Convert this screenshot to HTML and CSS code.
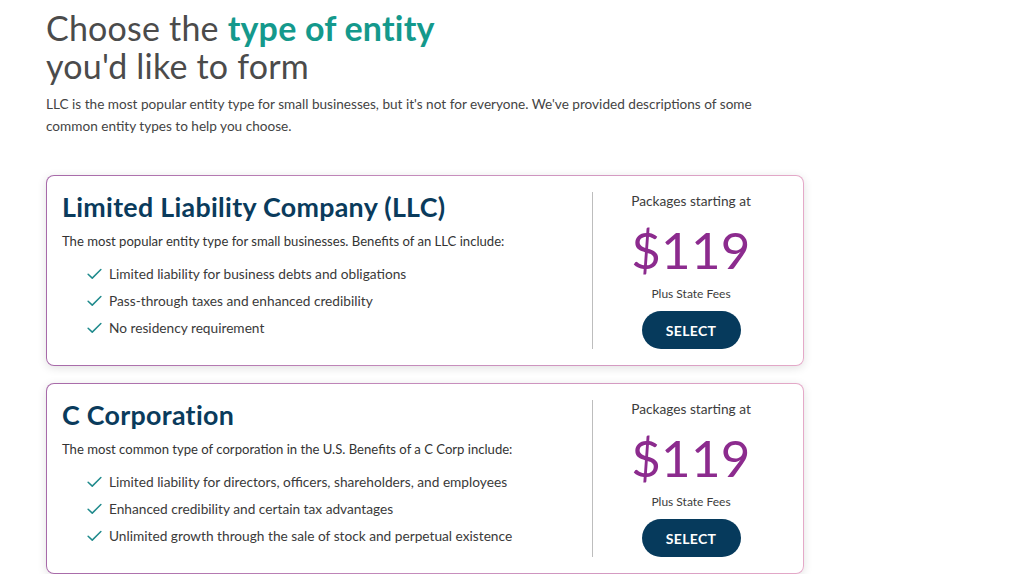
FILE: index.html
```html
<!DOCTYPE html>
<html lang="en">
<head>
<meta charset="utf-8">
<title>Choose entity type</title>
<link rel="stylesheet" href="styles.css">
</head>
<body>
<main class="page">
  <h1 class="headline">Choose the <span class="accent">type of entity</span><br>you'd like to form</h1>
  <p class="intro">LLC is the most popular entity type for small businesses, but it's not for everyone. We've provided descriptions of some common entity types to help you choose.</p>

  <section class="card">
    <div class="card-inner">
      <div class="info">
        <h2 class="title">Limited Liability Company (LLC)</h2>
        <p class="desc">The most popular entity type for small businesses. Benefits of an LLC include:</p>
        <ul class="benefits">
          <li><svg class="check" viewBox="0 0 16 12"><path d="M1.2 6.2 L5.6 10.4 L14.8 1.2"/></svg>Limited liability for business debts and obligations</li>
          <li><svg class="check" viewBox="0 0 16 12"><path d="M1.2 6.2 L5.6 10.4 L14.8 1.2"/></svg>Pass-through taxes and enhanced credibility</li>
          <li><svg class="check" viewBox="0 0 16 12"><path d="M1.2 6.2 L5.6 10.4 L14.8 1.2"/></svg>No residency requirement</li>
        </ul>
      </div>
      <div class="pricing">
        <div class="starting">Packages starting at</div>
        <div class="price">$119</div>
        <div class="fees">Plus State Fees</div>
        <button class="select">SELECT</button>
      </div>
    </div>
  </section>

  <section class="card">
    <div class="card-inner">
      <div class="info">
        <h2 class="title">C Corporation</h2>
        <p class="desc">The most common type of corporation in the U.S. Benefits of a C Corp include:</p>
        <ul class="benefits">
          <li><svg class="check" viewBox="0 0 16 12"><path d="M1.2 6.2 L5.6 10.4 L14.8 1.2"/></svg>Limited liability for directors, officers, shareholders, and employees</li>
          <li><svg class="check" viewBox="0 0 16 12"><path d="M1.2 6.2 L5.6 10.4 L14.8 1.2"/></svg>Enhanced credibility and certain tax advantages</li>
          <li><svg class="check" viewBox="0 0 16 12"><path d="M1.2 6.2 L5.6 10.4 L14.8 1.2"/></svg>Unlimited growth through the sale of stock and perpetual existence</li>
        </ul>
      </div>
      <div class="pricing">
        <div class="starting">Packages starting at</div>
        <div class="price">$119</div>
        <div class="fees">Plus State Fees</div>
        <button class="select">SELECT</button>
      </div>
    </div>
  </section>
</main>
</body>
</html>
```

FILE: styles.css
```css
* { box-sizing: border-box; }
html, body { margin: 0; padding: 0; background: #ffffff; }
body {
  font-family: Lato, "Open Sans", Arial, sans-serif;
  color: #3f3f3f;
  overflow: hidden;
}
.page {
  width: 758px;
  margin-left: 46px;
  padding-top: 9px;
}
.headline {
  margin: 0;
  font-family: Lato, Arial, sans-serif;
  font-weight: 400;
  font-size: 34px;
  line-height: 38px;
  color: #4b4b4b;
  letter-spacing: 0.2px;
}
.accent { color: #14998c; font-weight: 700; }
.intro {
  margin: 8px 0 0;
  font-size: 13.6px;
  line-height: 22px;
  color: #444;
  width: 730px;
}
.card {
  margin-top: 38px;
  border-radius: 8px;
  padding: 1px;
  background: linear-gradient(90deg, #a76aa9 0%, #c58cbc 50%, #e4a9c8 100%);
  box-shadow: 0 2px 10px rgba(0,0,0,0.12);
}
.card + .card { margin-top: 17px; }
.card-inner {
  background: #fff;
  border-radius: 7px;
  display: flex;
  padding: 16px 15px 16px 15px;
  height: 189px;
}
.info { flex: 1; }
.title {
  margin: 0;
  font-family: Lato, Arial, sans-serif;
  font-weight: 700;
  font-size: 26.8px;
  line-height: 30px;
  color: #0a3b5c;
  letter-spacing: 0.3px;
}
.desc {
  margin: 10px 0 0;
  font-size: 13.1px;
  line-height: 18px;
  color: #333;
}
.benefits {
  list-style: none;
  margin: 10px 0 0;
  padding: 0 0 0 25px;
}
.benefits li {
  display: flex;
  align-items: center;
  gap: 7px;
  font-size: 13.7px;
  line-height: 27px;
  color: #3a3a3a;
}
.check {
  width: 15px;
  height: 12px;
  fill: none;
  stroke: #1f8a8c;
  stroke-width: 1.6;
  stroke-linecap: round;
  stroke-linejoin: round;
}
.pricing {
  width: 197px;
  border-left: 1px solid #bdbdbd;
  display: flex;
  flex-direction: column;
  align-items: center;
  margin-right: -1px;
}
.starting {
  margin-top: 0;
  font-size: 13.7px;
  line-height: 18px;
  color: #3c3c3c;
}
.price {
  margin-top: 12px;
  font-size: 51px;
  line-height: 56px;
  color: #8c2b8e;
  letter-spacing: 0.3px;
}
.fees {
  margin-top: 8px;
  font-size: 12px;
  line-height: 16px;
  color: #3c3c3c;
}
.select {
  margin-top: 9px;
  width: 99px;
  height: 38px;
  border: none;
  border-radius: 19px;
  background: #063a5c;
  color: #fff;
  font-family: Lato, Arial, sans-serif;
  font-weight: 700;
  font-size: 14px;
  letter-spacing: 0.3px;
  cursor: pointer;
}
```
